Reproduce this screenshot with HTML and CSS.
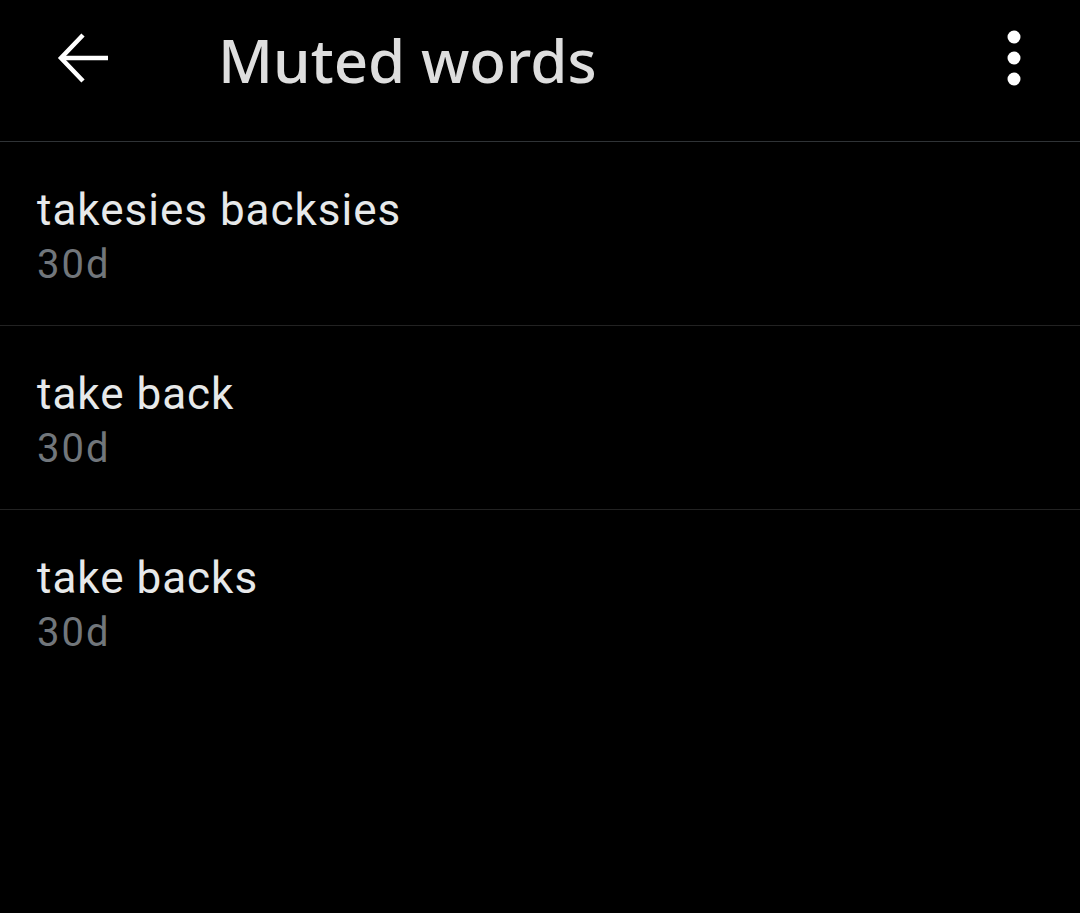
FILE: index.html
```html
<!DOCTYPE html>
<html lang="en">
<head>
    <meta charset="UTF-8">
    <meta name="viewport" content="width=device-width, initial-scale=1.0">
    <title>Muted words</title>
    <link rel="stylesheet" href="styles.css">
</head>
<body>
    <div class="app">
        <div class="topbar">
            <button class="icon-btn back-btn" aria-label="Back">
                <svg width="56" height="56" viewBox="0 0 56 56" fill="none" stroke="#ffffff" stroke-width="4.5" stroke-linecap="butt">
                    <path d="M52 27H7"/>
                    <path d="M27 4L5 27L27 50"/>
                </svg>
            </button>
            <h1 class="title">Muted words</h1>
            <button class="icon-btn more-btn" aria-label="More">
                <svg width="20" height="60" viewBox="0 0 20 60" fill="#ffffff">
                    <circle cx="10" cy="9" r="6.5"/>
                    <circle cx="10" cy="30" r="6.5"/>
                    <circle cx="10" cy="51" r="6.5"/>
                </svg>
            </button>
        </div>

        <ul class="word-list">
            <li class="word-item">
                <div class="word">takesies backsies</div>
                <div class="duration">30d</div>
            </li>
            <li class="word-item">
                <div class="word">take back</div>
                <div class="duration">30d</div>
            </li>
            <li class="word-item">
                <div class="word">take backs</div>
                <div class="duration">30d</div>
            </li>
        </ul>
    </div>
</body>
</html>
```

FILE: styles.css
```css
body {
    margin: 0;
    background-color: #000;
    font-family: Roboto, "Noto Sans", sans-serif;
    color: #e7e9ea;
}

.app {
    width: 1080px;
    min-height: 913px;
}

.topbar {
    display: flex;
    align-items: center;
    height: 141px;
    border-bottom: 1px solid #2f3336;
    box-sizing: content-box;
}

.icon-btn {
    background: none;
    border: none;
    padding: 0;
    display: flex;
    align-items: center;
    justify-content: center;
    cursor: pointer;
}

.back-btn {
    margin-left: 56px;
    margin-top: -24px;
}

.title {
    margin: 0 0 0 106px;
    flex: 1;
    font-family: "Noto Sans", Roboto, sans-serif;
    font-size: 60px;
    font-weight: 500;
    color: #dedede;
    margin-top: -22px;
}

.more-btn {
    margin-right: 56px;
    margin-top: -26px;
}

.word-list {
    list-style: none;
    margin: 0;
    padding: 0;
}

.word-item {
    height: 184px;
    border-bottom: 1px solid #222;
    padding: 40px 37px 0;
    box-sizing: border-box;
}

.word-item:last-child {
    border-bottom: none;
}

.word {
    font-size: 44px;
    line-height: 56px;
    letter-spacing: 1px;
    color: #e7e9ea;
}

.duration {
    font-size: 40px;
    line-height: 54px;
    letter-spacing: 2px;
    color: #71767b;
}
```
